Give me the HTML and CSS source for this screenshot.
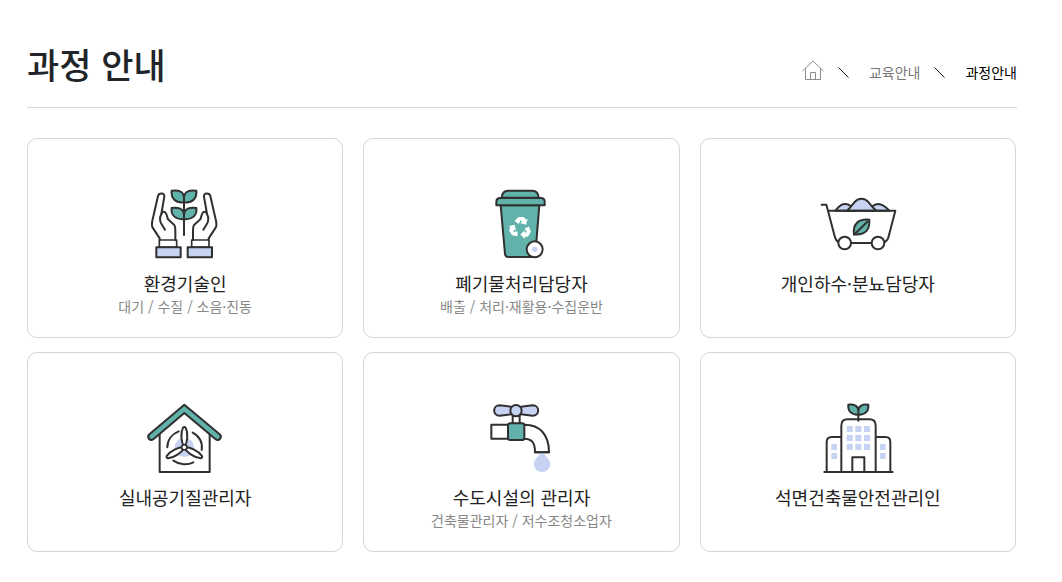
FILE: index.html
```html
<!DOCTYPE html>
<html lang="ko">
<head>
<meta charset="utf-8">
<meta name="viewport" content="width=device-width, initial-scale=1">
<title>과정 안내</title>
<link rel="stylesheet" href="styles.css">
</head>
<body>
<main class="page">
  <header class="page-head">
    <h1 class="page-title">과정 안내</h1>
    <nav class="crumbs" aria-label="현재 위치">
      <svg class="home" viewBox="0 0 22 20" role="img" aria-label="홈"><path d="M.5 11 11 1 21.500 11M3.500 8.500v11h15v-11M8.500 19.500v-7h5v7"/></svg>
      <svg class="sep" viewBox="0 0 11 11" aria-hidden="true"><path d="M.5.5l10 10"/></svg>
      <span class="crumb">교육안내</span>
      <svg class="sep" viewBox="0 0 11 11" aria-hidden="true"><path d="M.5.5l10 10"/></svg>
      <span class="crumb current" aria-current="page">과정안내</span>
    </nav>
  </header>
  <ul class="courses">
    <li class="card">
      <svg class="icon" viewBox="0 0 300 255" aria-hidden="true">
        <path d="M147 165V54"/>
        <g class="green">
          <path d="M147 67C122 70 107 55 110 32 124 30 147 30 147 55Z"/>
          <path d="M147 67C172 70 187 55 184 32 170 30 147 30 147 55Z"/>
          <path d="M147 117C122 120 107 106 110 84 124 82 147 82 147 106Z"/>
          <path d="M147 117C172 120 187 106 184 84 170 82 147 82 147 106Z"/>
        </g>
        <g id="hand">
          <path class="white" d="M74 180V175L53 143C50 138 50 132 52 122L69 48C72 37 90 38 88 50L79 102C81 94 90 92 94 102L99 118 117 134C121 138 121 145 121 152V180"/>
          <path d="M79 102C73 114 74 124 80 133L90 149"/>
          <path class="thin" d="M73 180h52v22H73z"/>
          <path class="blue" d="M64 202h73v30H64z"/>
        </g>
        <use href="#hand" transform="matrix(-1 0 0 1 295 0)"/>
      </svg>
      <h2 class="name">환경기술인</h2>
      <p class="detail">대기 / 수질 / 소음·진동</p>
    </li>
    <li class="card">
      <svg class="icon" viewBox="-10 0 300 255" aria-hidden="true">
        <g class="green">
          <path d="M79 76h116L183 222Q182 231 173 231H102Q93 231 92 222Z"/>
          <path d="M82 53C83 39 89 32 101 32h73c12 0 18 7 19 21Z"/>
          <path d="M66 76V65Q66 54 78 54H199Q211 54 211 65V76Z"/>
        </g>
        <g class="recycle">
          <path id="arrow" d="M121 124 129 114Q131 111 136 111H145Q149 111 152 115L154 119 160 116 155 134 137 129 143 126 139 120 133 132Z"/>
          <use href="#arrow" transform="rotate(120 138 144)"/>
          <use href="#arrow" transform="rotate(240 138 144)"/>
        </g>
        <circle class="white" cx="181" cy="208" r="24"/>
        <circle class="dot" cx="181" cy="208" r="8"/>
      </svg>
      <h2 class="name">폐기물처리담당자</h2>
      <p class="detail">배출 / 처리·재활용·수집운반</p>
    </li>
    <li class="card">
      <svg class="icon" viewBox="-6 -15 300 255" aria-hidden="true">
        <g class="blue">
          <path d="M76 77C91 59 98 56 108 57 117 57 124 63 134 77Z"/>
          <path d="M176 77C186 63 194 57 204 57 214 57 222 60 238 77Z"/>
          <path d="M111 77C120 70 126 61 133 52 145 38 164 38 176 52 183 61 190 70 199 77Z"/>
        </g>
        <path d="M35 59H49L54 77H256L236 154Q233 168 222 172M54 77 73 150Q77 168 88 173M122 174H184"/>
        <circle class="white" cx="104" cy="174" r="19"/>
        <circle class="white" cx="204" cy="174" r="19"/>
        <path class="green" d="M178 104C180 134 167 151 132 148 128 119 143 101 178 104Z"/>
        <path d="M132 149 172 110"/>
      </svg>
      <h2 class="name">개인하수·분뇨담당자</h2>
    </li>
    <li class="card">
      <svg class="icon" viewBox="0 -3 300 255" aria-hidden="true">
        <path class="white" d="M74 112V231H224V112L149 48Z"/>
        <path class="green" d="M148 29 253 117C264 127 252 140 241 132L148 54 56 132C45 140 33 127 44 117Z"/>
        <circle class="dot" cx="148" cy="157" r="29"/>
        <path d="M97 157C97 135 111 117 131 109M173 113C193 123 204 143 200 165M115 197C134 210 158 211 175 202"/>
        <g class="white">
          <path id="blade" d="M148 157C138 143 136 114 144 98Q148 94 152 98C160 114 158 143 148 157Z"/>
          <use href="#blade" transform="rotate(120 148 157)"/>
          <use href="#blade" transform="rotate(240 148 157)"/>
          <circle class="thin" cx="148" cy="157" r="8"/>
        </g>
      </svg>
      <h2 class="name">실내공기질관리자</h2>
    </li>
    <li class="card">
      <svg class="icon" viewBox="-10 -3 300 255" aria-hidden="true">
        <path class="white" d="M115 62h21v24h-21zM51 89h51v42H51zM149 89C196 88 224 119 224 172H182C182 144 174 131 149 131Z"/>
        <rect class="green" x="101" y="85" width="49" height="50" rx="7"/>
        <g class="blue">
          <path d="M110 35 76 31C54 31 54 62 76 62L110 58ZM140 35 175 31C197 31 197 62 175 62L140 58Z"/>
          <circle cx="125" cy="47" r="17"/>
        </g>
        <path class="dot" d="M203 168C209 181 228 192 228 207A25 24 0 0 1 178 207C178 192 197 181 203 168Z"/>
        <path d="M182 172H224"/>
      </svg>
      <h2 class="name">수도시설의 관리자</h2>
      <p class="detail">건축물관리자 / 저수조청소업자</p>
    </li>
    <li class="card">
      <svg class="icon" viewBox="-6 -3 300 255" aria-hidden="true">
        <path d="M145 77V56"/>
        <path class="green" d="M145 59C124 60 113 48 115 29 135 27 145 34 145 48ZM145 59C166 60 177 48 175 29 155 27 145 34 145 48Z"/>
        <path d="M50 230V142Q50 126 65 126H94M94 230V92Q94 73 113 73H178Q197 73 197 92V230M197 126H227Q241 126 241 142V230M127 230V187H163V230M43 231H248"/>
        <path class="dot" d="M110 93h18v18h-18zm26 0h18v18h-18zm26 0h18v18h-18zM110 120h18v18h-18zm26 0h18v18h-18zm26 0h18v18h-18zM110 147h18v18h-18zm26 0h18v18h-18zm26 0h18v18h-18zM64 147h17v18H64zm0 27h17v18H64zM210 147h17v18h-17zm0 27h17v18h-17z"/>
      </svg>
      <h2 class="name">석면건축물안전관리인</h2>
    </li>
  </ul>
</main>
</body>
</html>
```
FILE: styles.css
```css
* { box-sizing: border-box; }
body {
  margin: 0;
  background: #fff;
  color: #212529;
  font-family: "Noto Sans CJK KR", sans-serif;
}
.page { padding: 38px 45px 30px 27px; }
.page-head {
  display: flex;
  justify-content: space-between;
  align-items: flex-start;
  padding-bottom: 17px;
  border-bottom: 1px solid #d5d5d5;
}
.page-title {
  margin: 0;
  font-size: 35px;
  line-height: 52px;
  font-weight: 500;
}
.crumbs {
  display: flex;
  align-items: center;
  margin-top: 22px;
  font-size: 14px;
  line-height: 24px;
}
.home, .sep { fill: none; stroke: #8c8c8c; }
.home { width: 22px; height: 20px; margin-right: 14px; margin-bottom: 4px; }
.sep { width: 11px; height: 11px; stroke: #111; margin-right: 20px; }
.crumb { color: #777; margin-right: 14px; }
.current { color: #000; margin-right: 0; }
.courses {
  display: grid;
  grid-template-columns: repeat(3, 1fr);
  gap: 14px 20px;
  margin: 30px 0 0;
  padding: 0 1px 0 0;
  list-style: none;
}
.card {
  display: flex;
  flex-direction: column;
  align-items: center;
  min-height: 200px;
  padding: 41px 10px 18px;
  border: 1px solid #d5d5d5;
  border-radius: 10px;
  text-align: center;
}
.icon {
  width: 100px;
  height: 85px;
  fill: none;
  stroke: #303030;
  stroke-width: 6;
  stroke-linejoin: round;
  stroke-linecap: round;
}
.green { fill: #61b2aa; }
.blue { fill: #c6d3f2; }
.white { fill: #fff; }
.thin { stroke-width: 5; }
.dot { fill: #c6d3f2; stroke: none; }
.recycle { fill: #fff; stroke: none; }
.name {
  margin: 6px 0 0;
  font-size: 18px;
  line-height: 24px;
  font-weight: 400;
  color: #222;
}
.detail {
  margin: 0;
  font-size: 14px;
  line-height: 22px;
  color: #888;
}
```
